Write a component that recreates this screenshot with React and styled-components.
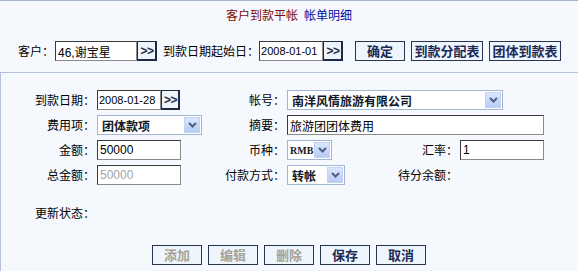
import React from "react";
import styled, { createGlobalStyle } from "styled-components";

const GlobalStyle = createGlobalStyle`
  html, body {
    margin: 0;
    padding: 0;
    background: #f5f9fe;
  }
  body {
    font-family: "Noto Sans CJK SC", "Liberation Sans", sans-serif;
    font-size: 12px;
    color: #000;
  }
`;

const Page = styled.div`
  width: 578px;
  height: 271px;
  box-sizing: border-box;
  border-top: 1px solid #a7b6cf;
  background: #f5f9fe;
  display: flex;
  flex-direction: column;
`;

const Title = styled.div`
  height: 28px;
  display: flex;
  justify-content: center;
  align-items: center;
  gap: 6px;
  font-size: 12px;
  line-height: 14px;
`;

const TitleText = styled.span`
  color: ${(p) => (p.$link ? "#0a0a9c" : "#7a0b0b")};
`;

const Toolbar = styled.div`
  display: flex;
  align-items: center;
  height: 20px;
  padding: 12px 0 11px 18px;
`;

const Label = styled.span`
  white-space: nowrap;
  line-height: 20px;
  margin-left: ${(p) => p.$ml || 0}px;
  margin-right: ${(p) => p.$mr || 0}px;
`;

const TextInput = styled.input`
  box-sizing: border-box;
  width: ${(p) => p.$w}px;
  height: 20px;
  margin: 0;
  padding: 0 ${(p) => (p.$date ? 1 : 2)}px;
  border: 1px solid #3a3a3a;
  border-right-color: #8a8a8a;
  border-bottom-color: #8a8a8a;
  background: #fff;
  font-family: "Liberation Sans", "Noto Sans CJK SC", sans-serif;
  font-size: ${(p) => (p.$date ? 11 : 12)}px;
  color: #000;
  outline: none;

  &:disabled {
    color: #a3a3a3;
    background: #fff;
  }
`;

const MoreButton = styled.button`
  box-sizing: border-box;
  width: ${(p) => p.$w || 20}px;
  height: 20px;
  margin: 0;
  padding: 0 0 0 1px;
  border: 1px solid #1f2b45;
  border-right-width: 2px;
  border-bottom-width: 2px;
  background: #eef4fc;
  color: #1f2b45;
  font-family: "Liberation Sans", sans-serif;
  font-size: 12px;
  font-weight: bold;
  line-height: 16px;
  letter-spacing: -0.5px;
`;

const ActionButton = styled.button`
  box-sizing: border-box;
  width: ${(p) => p.$w || 50}px;
  height: 20px;
  margin: 0 0 0 ${(p) => p.$ml || 0}px;
  padding: 0;
  border: 1px solid #2a3550;
  background: #eef5fd;
  color: #1c2b55;
  font-family: "Noto Sans CJK SC", sans-serif;
  font-size: 13px;
  font-weight: bold;
  line-height: 18px;
  white-space: nowrap;

  &:disabled {
    color: #a7a293;
  }
`;

const Panel = styled.div`
  flex: 1;
  border-top: 1px solid #b3c2da;
  border-left: 1px solid #b3c2da;
  padding-top: 17px;
`;

const FormGrid = styled.div`
  display: grid;
  grid-template-columns: 94px 108px 78px 109px 60px 84px;
  grid-auto-rows: 20px;
  column-gap: 2px;
  row-gap: 5px;
`;

const FieldLabel = styled.div`
  text-align: right;
  white-space: nowrap;
  line-height: 20px;
  grid-column: ${(p) => p.$col};
`;

const Cell = styled.div`
  display: flex;
  align-items: center;
  grid-column: ${(p) => p.$col};
`;

const Select = styled.div`
  box-sizing: border-box;
  width: ${(p) => p.$w}px;
  height: 20px;
  border: 1px solid #a2b5d3;
  background: #fff;
  display: flex;
  align-items: center;
  justify-content: space-between;
  padding: 0 1px 0 ${(p) => (p.$small ? 2 : 4)}px;
  font-size: ${(p) => (p.$small ? 10 : 12)}px;
  font-family: ${(p) =>
    p.$small ? '"Liberation Serif", serif' : '"Noto Sans CJK SC", sans-serif'};
  font-weight: bold;
  color: #121826;
  white-space: nowrap;
  overflow: hidden;
`;

const ArrowBox = styled.span`
  flex: none;
  width: 16px;
  height: 16px;
  box-sizing: border-box;
  border: 1px solid #c3d3f2;
  background: linear-gradient(#dbe6fc, #b7cbf4);
  display: flex;
  align-items: center;
  justify-content: center;
`;

const StatusRow = styled.div`
  display: flex;
  margin-top: 18px;
`;

const StatusLabel = styled.div`
  width: 94px;
  text-align: right;
  line-height: 20px;
`;

const BottomBar = styled.div`
  display: flex;
  justify-content: center;
  gap: 6px;
  margin-top: 22px;
  padding-right: 1px;
`;

const Chevron = () => (
  <svg width="9" height="6" viewBox="0 0 9 6">
    <path d="M1 1 L4.5 4.5 L8 1" fill="none" stroke="#4a5f86" strokeWidth="2" />
  </svg>
);

const Dropdown = ({ w, small, children }) => (
  <Select $w={w} $small={small}>
    <span>{children}</span>
    <ArrowBox>
      <Chevron />
    </ArrowBox>
  </Select>
);

export default function App() {
  return (
    <Page>
      <GlobalStyle />
      <Title>
        <TitleText>客户到款平帐</TitleText>
        <TitleText $link>帐单明细</TitleText>
      </Title>

      <Toolbar>
        <Label $mr={1}>客户：</Label>
        <TextInput $w={82} defaultValue="46,谢宝星" />
        <MoreButton>&gt;&gt;</MoreButton>
        <Label $ml={6}>到款日期起始日：</Label>
        <TextInput $w={64} $date defaultValue="2008-01-01" />
        <MoreButton>&gt;&gt;</MoreButton>
        <ActionButton $ml={12}>确定</ActionButton>
        <ActionButton $ml={6} $w={72}>到款分配表</ActionButton>
        <ActionButton $ml={6} $w={72}>团体到款表</ActionButton>
      </Toolbar>

      <Panel>
        <FormGrid>
          <FieldLabel $col={1}>到款日期：</FieldLabel>
          <Cell $col={2}>
            <TextInput $w={64} $date defaultValue="2008-01-28" />
            <MoreButton $w={19}>&gt;&gt;</MoreButton>
          </Cell>
          <FieldLabel $col={3}>帐号：</FieldLabel>
          <Cell $col="4 / span 3">
            <Dropdown w={216}>南洋风情旅游有限公司</Dropdown>
          </Cell>

          <FieldLabel $col={1}>费用项：</FieldLabel>
          <Cell $col={2}>
            <Dropdown w={105}>团体款项</Dropdown>
          </Cell>
          <FieldLabel $col={3}>摘要：</FieldLabel>
          <Cell $col="4 / span 3">
            <TextInput $w={257} defaultValue="旅游团团体费用" />
          </Cell>

          <FieldLabel $col={1}>金额：</FieldLabel>
          <Cell $col={2}>
            <TextInput $w={84} defaultValue="50000" />
          </Cell>
          <FieldLabel $col={3}>币种：</FieldLabel>
          <Cell $col={4}>
            <Dropdown w={45} small>RMB</Dropdown>
          </Cell>
          <FieldLabel $col={5}>汇率：</FieldLabel>
          <Cell $col={6}>
            <TextInput $w={84} defaultValue="1" />
          </Cell>

          <FieldLabel $col={1}>总金额：</FieldLabel>
          <Cell $col={2}>
            <TextInput $w={84} defaultValue="50000" disabled />
          </Cell>
          <FieldLabel $col={3}>付款方式：</FieldLabel>
          <Cell $col={4}>
            <Dropdown w={58}>转帐</Dropdown>
          </Cell>
          <FieldLabel $col={5}>待分余额：</FieldLabel>
        </FormGrid>

        <StatusRow>
          <StatusLabel>更新状态：</StatusLabel>
        </StatusRow>

        <BottomBar>
          <ActionButton disabled>添加</ActionButton>
          <ActionButton disabled>编辑</ActionButton>
          <ActionButton disabled>删除</ActionButton>
          <ActionButton>保存</ActionButton>
          <ActionButton>取消</ActionButton>
        </BottomBar>
      </Panel>
    </Page>
  );
}
